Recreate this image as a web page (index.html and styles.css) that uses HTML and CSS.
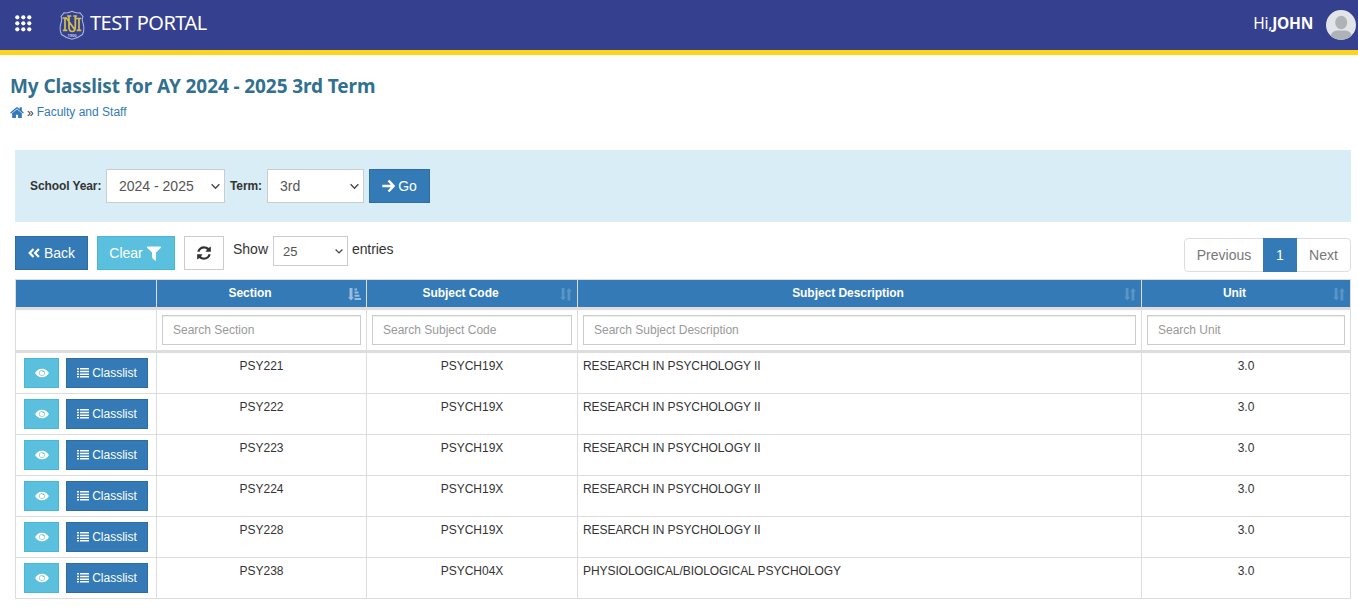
FILE: index.html
```html
<!DOCTYPE html>
<html lang="en">
<head>
  <meta charset="UTF-8" />
  <title>My Classlist</title>
  <link rel="stylesheet" href="styles.css">
</head>
<body>

<!-- Icons -->
<svg class="sprite" width="0" height="0">
  <symbol id="eye" viewBox="0 0 14 10">
    <path fill-rule="evenodd" d="M7 .7C3.800.7 1.300 2.700.1 5 1.300 7.300 3.800 9.300 7 9.300S12.700 7.300 13.900 5C12.700 2.700 10.200.7 7 .7zM7 2.200a2.800 2.800 0 1 1 0 5.600 2.800 2.800 0 0 1 0-5.600z"/>
    <path d="M7 2.700a2.300 2.300 0 1 0 2.300 2.300c0-.4-.1-.8-.3-1.100a1.200 1.200 0 0 1-1.700-1.200z"/>
  </symbol>
  <symbol id="list" viewBox="0 0 12 11">
    <path d="M0 1h2v1.500H0zM3 1h9v1.500H3zM0 3.700h2v1.500H0zM3 3.700h9v1.500H3zM0 6.400h2v1.500H0zM3 6.400h9v1.500H3zM0 9.100h2v1.500H0zM3 9.100h9v1.500H3z"/>
  </symbol>
  <symbol id="chevron" viewBox="0 0 8 6">
    <path d="M.6 1L4 4.500 7.400 1" fill="none" stroke="#444" stroke-width="1.200"/>
  </symbol>
  <symbol id="sort" viewBox="0 0 12 13">
    <path d="M1.700 0h2.800v9H6l-2.700 3.500L.2 9h1.500zM7.500 12.500h2.800v-9h1.700L9 0 6.200 3.500h1.300z"/>
  </symbol>
  <symbol id="sort-asc" viewBox="0 0 13 13">
    <path d="M1.500 0h3v9.300H6L3 12.500 0 9.300h1.500zM6.500 .5h2.500v2H6.500zM6.500 3.500h4v2h-4zM6.500 6.700h5v2h-5zM6.500 10h6.500v2H6.500z"/>
  </symbol>
</svg>

<header class="navbar">
  <svg class="apps" width="17" height="17" viewBox="0 0 17 17" fill="#fff">
    <circle cx="2.300" cy="2.300" r="2.100"/><circle cx="8.300" cy="2.300" r="2.100"/><circle cx="14.300" cy="2.300" r="2.100"/>
    <circle cx="2.300" cy="8.300" r="2.100"/><circle cx="8.300" cy="8.300" r="2.100"/><circle cx="14.300" cy="8.300" r="2.100"/>
    <circle cx="2.300" cy="14.300" r="2.100"/><circle cx="8.300" cy="14.300" r="2.100"/><circle cx="14.300" cy="14.300" r="2.100"/>
  </svg>
  <svg class="logo" width="26" height="30" viewBox="0 0 26 30">
    <path d="M13 1.300Q17 3.500 21 2.800L24 6.500Q22.500 9 24 13 26 19 23.500 24.500 19 28 13 29.200 7 28 2.500 24.500 0 19 2 13 3.500 9 2 6.500L5 2.800Q9 3.500 13 1.300z" fill="none" stroke="#a9b2d8" stroke-width="1.100"/>
    <path d="M3.500 8H7.500L16 20M6 8V20M3.800 20.300H8.300M16.500 8.500H22.300M20 8.500V20.300M17.600 20.300H22.300M8 6H12.300M10 6V17Q10 21.500 13.200 21.500 16.300 21.500 16.300 17V6M14.300 6H18" fill="none" stroke="#d4bf4e" stroke-width="1.700"/>
    <text class="logo-year" x="13" y="26.700" text-anchor="middle">1900</text>
  </svg>
  <span class="brand">TEST PORTAL</span>
  <span class="user">Hi,<b>JOHN</b></span>
  <svg class="avatar" width="30" height="30" viewBox="0 0 30 30">
    <clipPath id="round"><circle cx="15" cy="15" r="15"/></clipPath>
    <g clip-path="url(#round)">
      <path d="M0 0h30v30H0z" fill="#e2e5e7"/>
      <ellipse cx="15.200" cy="12.500" rx="6" ry="6.700" fill="#adb3b7"/>
      <path d="M4 27Q6 20.500 11 20.500H19.500Q24.500 20.500 26.500 27V30H4z" fill="#adb3b7"/>
    </g>
  </svg>
</header>

<h1 class="page-title">My Classlist for AY 2024 - 2025 3rd Term</h1>
<div class="breadcrumb">
  <svg width="14" height="14" viewBox="64 0 1664 1664" fill="#337ab7"><path d="M1472 992v480q0 26-19 45t-45 19h-384v-384h-256v384h-384q-26 0-45-19t-19-45v-480q0-1 .5-3t.5-3l575-474 575 474q1 2 1 6zm223-69l-62 74q-8 9-21 11h-3q-13 0-21-7l-692-577-692 577q-12 8-24 7-13-2-21-11l-62-74q-8-10-7-23.500t11-21.500l719-599q32-26 76-26t76 26l244 204v-195q0-14 9-23t23-9h192q14 0 23 9t9 23v408l219 182q10 8 11 21.500t-7 23.500z"/></svg>
  <span class="sep">»</span>
  <a href="#">Faculty and Staff</a>
</div>

<div class="filter-bar">
  <label class="label-year">School Year:</label>
  <div class="select year">
    <select><option>2024 - 2025</option></select>
    <svg><use href="#chevron"/></svg>
  </div>
  <label class="label-term">Term:</label>
  <div class="select term">
    <select><option>3rd</option></select>
    <svg><use href="#chevron"/></svg>
  </div>
  <button class="btn btn-primary btn-go">
    <svg width="13" height="14" viewBox="0 0 13 14"><path d="M.3 7H11.500M6.500 1.500L11.500 7 6.500 12.500" fill="none" stroke="#fff" stroke-width="2.500"/></svg>
    Go
  </button>
</div>

<div class="toolbar">
  <button class="btn btn-primary btn-back">
    <svg width="12" height="12" viewBox="0 0 12 12"><path d="M5.500 2L1.700 6l3.800 4M10.900 2L7.100 6l3.800 4" fill="none" stroke="#fff" stroke-width="2.200"/></svg>
    Back
  </button>
  <button class="btn btn-info btn-clear">
    Clear
    <svg width="18" height="18" viewBox="0 0 1792 1792" fill="#fff"><path d="M1595 295q17 41-14 70l-493 493v742q0 42-39 59-13 5-25 5-27 0-45-19l-256-256q-19-19-19-45v-486l-493-493q-31-29-14-70 17-39 59-39h1280q42 0 59 39z"/></svg>
  </button>
  <button class="btn btn-default btn-refresh">
    <svg width="16" height="16" viewBox="0 0 1792 1792" fill="#333"><path d="M1639 1056q0 5-1 7-64 268-268 434.500t-478 166.500q-146 0-282.500-55t-243.500-157l-129 129q-19 19-45 19t-45-19-19-45v-448q0-26 19-45t45-19h448q26 0 45 19t19 45-19 45l-137 137q71 66 161 102t187 36q134 0 250-65t186-179q11-17 53-117 8-23 30-23h192q13 0 22.500 9.500t9.500 22.500zm25-800v448q0 26-19 45t-45 19h-448q-26 0-45-19t-19-45 19-45l138-138q-148-137-349-137-134 0-250 65t-186 179q-11 17-53 117-8 23-30 23h-199q-13 0-22.500-9.500t-9.500-22.500v-7q65-268 270-434.500t480-166.500q146 0 284 55.500t245 156.500l130-129q19-19 45-19t45 19 19 45z"/></svg>
  </button>
  <span class="show">Show</span>
  <div class="select length">
    <select><option>25</option></select>
    <svg><use href="#chevron"/></svg>
  </div>
  <span class="entries">entries</span>
  <div class="pagination">
    <a class="prev">Previous</a><a class="active">1</a><a class="next">Next</a>
  </div>
</div>

<table class="classlist">
  <colgroup><col class="c1"><col class="c2"><col class="c3"><col class="c4"><col class="c5"></colgroup>
  <thead>
    <tr class="heads">
      <th></th>
      <th><div>Section<svg class="on"><use href="#sort-asc"/></svg></div></th>
      <th><div>Subject Code<svg><use href="#sort"/></svg></div></th>
      <th><div>Subject Description<svg><use href="#sort"/></svg></div></th>
      <th><div>Unit<svg><use href="#sort"/></svg></div></th>
    </tr>
    <tr class="search">
      <td></td>
      <td><input placeholder="Search Section"></td>
      <td><input placeholder="Search Subject Code"></td>
      <td><input placeholder="Search Subject Description"></td>
      <td><input placeholder="Search Unit"></td>
    </tr>
  </thead>
  <tbody id="rows"></tbody>
</table>

<script>
  const rows = [
    ["PSY221", "PSYCH19X", "RESEARCH IN PSYCHOLOGY II", "3.0"],
    ["PSY222", "PSYCH19X", "RESEARCH IN PSYCHOLOGY II", "3.0"],
    ["PSY223", "PSYCH19X", "RESEARCH IN PSYCHOLOGY II", "3.0"],
    ["PSY224", "PSYCH19X", "RESEARCH IN PSYCHOLOGY II", "3.0"],
    ["PSY228", "PSYCH19X", "RESEARCH IN PSYCHOLOGY II", "3.0"],
    ["PSY238", "PSYCH04X", "PHYSIOLOGICAL/BIOLOGICAL PSYCHOLOGY", "3.0"]
  ];

  document.getElementById("rows").innerHTML = rows.map(r => `
    <tr>
      <td><div class="actions">
        <button class="btn btn-info btn-sm btn-eye"><svg><use href="#eye"/></svg></button>
        <button class="btn btn-primary btn-sm btn-list"><svg><use href="#list"/></svg>Classlist</button>
      </div></td>
      <td>${r[0]}</td>
      <td>${r[1]}</td>
      <td class="desc">${r[2]}</td>
      <td>${r[3]}</td>
    </tr>`).join("");
</script>
</body>
</html>
```

FILE: styles.css
```css
* {
  box-sizing: border-box;
}
body {
  margin: 0;
  background: #fff;
  color: #333;
  font-family: "Liberation Sans", Arial, sans-serif;
  font-size: 12px;
}
.sprite {
  position: absolute;
}
.navbar {
  display: flex;
  align-items: center;
  height: 55px;
  padding: 0 2px 0 15px;
  background: #35408f;
  border-bottom: 5px solid #ffd41c;
  color: #fff;
  font-family: "Noto Sans", sans-serif;
}
.apps {
  margin-top: -4px;
}
.logo {
  margin-left: 27px;
}
.logo-year {
  font-size: 4px;
  font-weight: bold;
  fill: #c5cbe6;
}
.brand {
  margin: -5px 0 0 5px;
  font-size: 20px;
  font-weight: 400;
  letter-spacing: -.55px;
}
.user {
  margin: -4px 13px 0 auto;
  font-size: 15.500px;
  letter-spacing: -.25px;
}
.page-title {
  margin: 18px 0 0 10px;
  height: 28px;
  line-height: 27px;
  color: #31708f;
  font-family: "Noto Sans", sans-serif;
  font-size: 19px;
  font-weight: 700;
  letter-spacing: -.1px;
  white-space: nowrap;
}
.breadcrumb {
  display: flex;
  align-items: center;
  height: 20px;
  margin: 1px 0 0 10px;
}
.breadcrumb a {
  color: #337ab7;
  text-decoration: none;
}
.sep {
  margin: 1px 3px 0 3px;
  font-size: 12px;
}
.filter-bar {
  display: flex;
  align-items: center;
  height: 72px;
  margin: 28px 7px 0 15px;
  padding-left: 15px;
  background: #d9edf7;
}
.filter-bar label {
  font-weight: bold;
  letter-spacing: -.1px;
  white-space: nowrap;
}
.label-year {
  width: 71px;
}
.label-term {
  width: 32px;
}
.select {
  position: relative;
}
.select select {
  width: 100%;
  height: 34px;
  padding: 0 12px;
  border: 1px solid #ccc;
  border-radius: 0;
  background: #fff;
  color: #555;
  font-family: inherit;
  font-size: 14px;
  appearance: none;
}
.select svg {
  position: absolute;
  right: 5px;
  top: 14px;
  width: 9px;
  height: 7px;
}
.year {
  width: 119px;
  margin: 0 5px;
}
.term {
  width: 97px;
  margin: 0 5px;
}
.length {
  width: 75px;
}
.length select {
  height: 30px;
  padding: 0 9px;
  font-size: 13px;
}
.length svg {
  top: 12px;
  width: 8px;
}
.btn {
  display: flex;
  align-items: center;
  justify-content: center;
  gap: 3px;
  height: 34px;
  padding: 0;
  border: 1px solid;
  color: #fff;
  font-family: inherit;
  font-size: 14px;
}
.btn-primary {
  background: #337ab7;
  border-color: #2e6da4;
}
.btn-info {
  background: #5bc0de;
  border-color: #46b8da;
}
.btn-default {
  background: #fff;
  border-color: #ccc;
}
.btn-go {
  width: 61px;
}
.toolbar {
  display: flex;
  height: 57px;
  padding: 14px 7px 0 15px;
  font-size: 14px;
}
.btn-back {
  width: 73px;
  gap: 4px;
}
.btn-clear {
  width: 78px;
  margin: 0 9px;
  gap: 2px;
}
.btn-refresh {
  width: 40px;
  padding-right: 1px;
}
.show {
  width: 35px;
  margin: 5px 5px 0 9px;
}
.entries {
  margin: 5px 0 0 4px;
  letter-spacing: -.1px;
}
.pagination {
  display: flex;
  width: 167px;
  height: 34px;
  margin: 2px 0 0 auto;
  border: 1px solid #ddd;
  border-radius: 4px;
  color: #777;
  line-height: 32px;
  text-align: center;
}
.prev {
  width: 78px;
}
.active {
  width: 34px;
  height: 34px;
  margin-top: -1px;
  line-height: 34px;
  background: #337ab7;
  color: #fff;
}
.next {
  flex: 1;
}
.classlist {
  width: 1336px;
  margin-left: 15px;
  table-layout: fixed;
  border-collapse: separate;
  border-spacing: 0;
  border: solid #ddd;
  border-width: 1px 0 0 1px;
}
.c1 { width: 141px; }
.c2 { width: 210px; }
.c3 { width: 211px; }
.c4 { width: 564px; }
.c5 { width: 209px; }
.classlist th,
.classlist td {
  padding: 0;
  border: solid #ddd;
  border-width: 0 1px 1px 0;
  text-align: center;
}
.classlist .heads th {
  height: 30px;
  padding-bottom: 2px;
  border-bottom-width: 3px;
  background: #337ab7;
  color: #fff;
  letter-spacing: -.05px;
}
.heads div {
  position: relative;
  padding-right: 23px;
}
.heads svg {
  position: absolute;
  right: 5px;
  top: 2px;
  width: 12px;
  height: 13px;
  fill: #fff;
  opacity: .2;
}
.heads svg.on {
  width: 13px;
  opacity: .5;
}
.classlist .search td {
  height: 43px;
  padding: 0 5px;
  border-bottom-width: 3px;
}
.search input {
  display: block;
  width: 100%;
  height: 30px;
  padding: 0 10px;
  border: 1px solid #ccc;
  box-shadow: inset 0 1px 1px rgba(0, 0, 0, .075);
  font-family: inherit;
  font-size: 12px;
}
.search input::placeholder {
  color: #999;
}
tbody td {
  height: 41px;
  vertical-align: top;
}
.classlist tbody td {
  padding-top: 6px;
}
.classlist tbody .desc {
  padding-left: 5px;
  text-align: left;
  letter-spacing: -.07px;
}
.actions {
  display: flex;
  gap: 7px;
  padding-left: 8px;
  margin-top: -1px;
}
.btn-sm {
  height: 30px;
  font-size: 12px;
}
.btn-eye {
  width: 35px;
}
.btn-eye svg {
  width: 14px;
  height: 10px;
  fill: #fff;
}
.btn-list {
  width: 82px;
}
.btn-list svg {
  width: 12px;
  height: 11px;
  margin-top: -1px;
  fill: #fff;
}
```
